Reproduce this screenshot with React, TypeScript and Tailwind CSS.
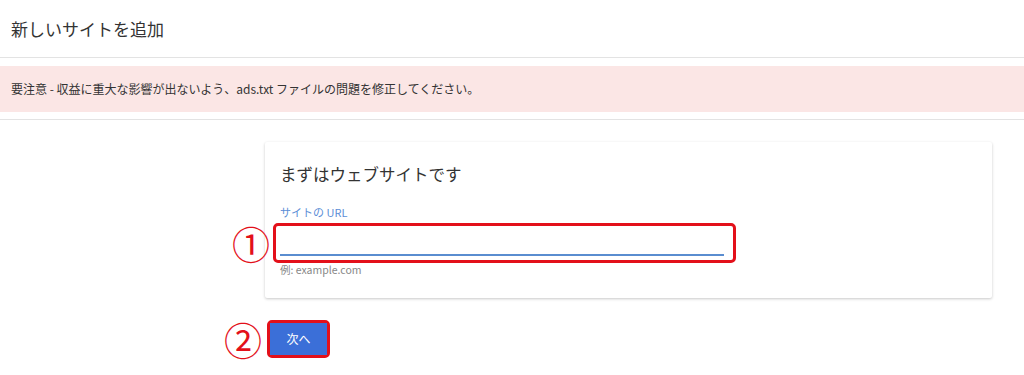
import React from "react";

export default function App() {
  return (
    <div
      className="w-[1024px] h-[375px] bg-white overflow-hidden text-[#333]"
      style={{ fontFamily: '"Noto Sans CJK JP", "Noto Sans", Roboto, sans-serif' }}
    >
      <div className="h-[58px] border-b border-[#e3e3e3] px-[11px] flex items-center">
        <h1 className="text-[17px] leading-none text-[#333] font-normal">新しいサイトを追加</h1>
      </div>
      <div className="mt-[8px] h-[46px] bg-[#fbe6e5] px-[11px] flex items-center">
        <p className="text-[12px] text-[#333]">
          要注意 - 収益に重大な影響が出ないよう、ads.txt ファイルの問題を修正してください。
        </p>
      </div>
      <div className="mt-[7px] border-b border-[#e3e3e3]" />

      <div className="relative ml-[265px] mt-[22px] w-[727px] h-[156px] bg-white rounded-[2px] shadow-[0_1px_3px_rgba(0,0,0,0.22)] pl-[15px] pr-[15px] pt-[22px]">
        <h2 className="text-[16.5px] leading-[20px] text-[#333] font-normal">まずはウェブサイトです</h2>
        <div className="mt-[22px] text-[11px] leading-[13px] text-[#5b8ed6]">サイトの URL</div>
        <div className="relative mt-[5px] w-[444px] h-[32px]">
          <div className="absolute bottom-0 left-0 right-0 h-[2px] bg-[#5a8dd0]" />
          <div className="absolute -left-[7px] -top-[1px] w-[463px] h-[40px] border-[3px] border-[#e3101a] rounded-[5px]" />
        </div>
        <div className="mt-[7px] text-[10.5px] leading-[13px] text-[#888]">例: example.com</div>
        <div className="absolute -left-[33px] top-[82px] text-[38px] leading-none text-[#e3101a]">①</div>
      </div>

      <div className="relative ml-[267px] mt-[22px] w-[63px] h-[38px] border-[3px] border-[#e3101a] rounded-[5px] p-0">
        <button className="w-full h-full bg-[#3b6fd8] text-white text-[12px] flex items-center justify-center">
          次へ
        </button>
        <div className="absolute -left-[46px] top-[-3px] text-[38px] leading-none text-[#e3101a]">②</div>
      </div>
    </div>
  );
}
